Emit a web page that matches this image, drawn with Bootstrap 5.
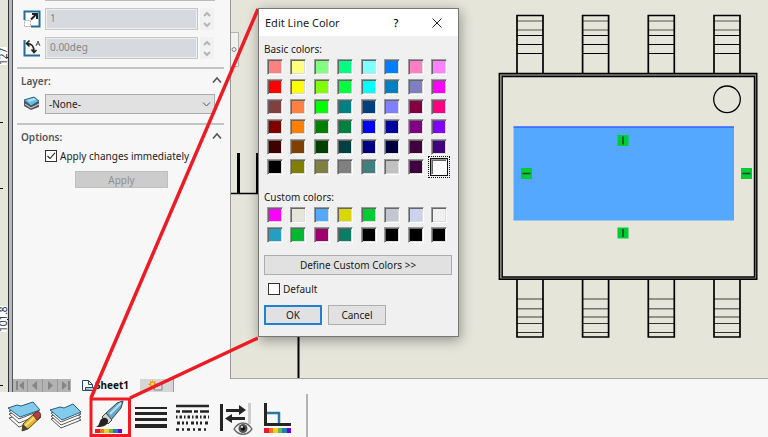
<!DOCTYPE html>
<html lang="en">
<head>
<meta charset="utf-8">
<meta name="viewport" content="width=device-width, initial-scale=1">
<title>Edit Line Color</title>
<link href="https://cdn.jsdelivr.net/npm/bootstrap@5.3.0/dist/css/bootstrap.min.css" rel="stylesheet">
<style>
  body { font-family: "Noto Sans", "Open Sans", sans-serif; font-size: 10px; line-height: 16px; color: #222; background: #f7f7f7; }
  button { font: inherit; }
  svg { display: block; }
  .ruler { width: 13px; background: linear-gradient(90deg, #e5e5da 8px, #333 8px, #333 9px, #b4b7c4 9px, #b4b7c4 12px, #555 12px); }
  .ruler svg { width: 8px; height: 392px; font-family: "Open Sans", sans-serif; font-size: 10px; }
  .props { width: 218px; background: #f7f7f7; border-right: 1px solid #999; }
  .section-rule { height: 2px; margin: 0 6px 0 4px; background: #c4c4c4; }
  .top-rule { height: 1px; margin: 0 15px 0 32px; background: #bbb; }
  .prop-row { padding: 7px 16px 0 10px; }
  .prop-icon { width: 18px; height: 18px; flex: none; }
  .prop-input { height: 22px; margin-left: 4px; padding: 0 4px 3px; border: 1px solid #c6c6c6; outline: 1px solid #eee; outline-offset: -2px; border-radius: 0; background: #d6dadf; color: #858585; font-size: 10px; line-height: 16px; }
  .prop-input:disabled { background: #d6dadf; }
  .spin { width: 14px; height: 22px; margin-left: 2px; background: #f1f1f1; }
  .spin button { height: 11px; padding: 0; border: 0; background: none; }
  .heading { font-weight: 600; color: #555; padding: 4px 7px 0 8px; }
  .heading button { border: 0; background: none; padding: 0 1px; }
  .layer-row { padding: 5px 15px 9px 10px; }
  .layer-select { height: 20px; margin-left: 4px; padding: 0 3px; border: 1px solid #ababab; border-radius: 0; font-size: 10px; line-height: 16px; color: #222;
    background: #e1e1e1 url("data:image/svg+xml,%3Csvg xmlns='http://www.w3.org/2000/svg' viewBox='0 0 9 9'%3E%3Cpath d='M1 2.5 4.5 6 8 2.5' fill='none' stroke='%23555'/%3E%3C/svg%3E") no-repeat right 3px center / 9px 9px; }
  .tick { appearance: none; width: 12px; height: 12px; margin: 0; border: 1px solid #333; background: #fff; }
  .tick:checked { background: #fff url("data:image/svg+xml,%3Csvg xmlns='http://www.w3.org/2000/svg' viewBox='0 0 10 10'%3E%3Cpath d='M1.5 5 4 7.5 9 1.8' fill='none' stroke='%23222' stroke-width='1.1'/%3E%3C/svg%3E") center / 10px 10px; }
  .tick + label { padding-left: 3px; }
  .options-body { padding: 3px 0 0 32px; }
  .apply { width: 93px; height: 17px; margin: 7px 0 0 30px; padding: 0; border: 1px solid #bfbfbf; background: #ccc; color: #909090; line-height: 14px; }
  .drawing { background: #e5e5da; border-bottom: 1px solid #a5a5a5; min-width: 0; min-height: 0; }
  .drawing > svg { width: 100%; height: 378px; }
  .dialog-box { left: 27px; top: 8px; width: 201px; background: #f0f0f0; border: 1px solid #777; box-shadow: 1px 3px 12px rgba(0, 0, 0, .38); color: #1a1a1a; }
  .title-bar { height: 27px; background: #fff; padding: 0 15px 0 6px; font-size: 11px; }
  .title-bar button { border: 0; background: none; padding: 0; width: 12px; }
  .title-bar .help { margin-right: 29px; font-weight: 500; }
  .dialog-content { padding: 5px 6px 11px 5px; }
  .swatches { display: grid; grid-template-columns: repeat(7, 1fr) 16px; row-gap: 4px; padding: 0 5px 0 3px; margin-top: 2px; }
  .swatch { width: 16px; height: 16px; padding: 0; border: 1px solid; border-color: #999 #fff #fff #999; box-shadow: inset 1px 1px #666, inset -1px -1px #ddd; }
  .swatch[aria-pressed="true"] { outline: 1px solid #111; box-shadow: 0 0 0 2px #f0f0f0, inset 1px 1px #666; position: relative; }
  .swatch[aria-pressed="true"]::after { content: ""; position: absolute; inset: -4px; border: 1px dotted #111; }
  .custom-label { margin-top: 14px; }
  .win-btn { height: 20px; padding: 0; border: 1px solid #adadad; background: #e1e1e1; color: #1a1a1a; line-height: 16px; }
  .win-btn.primary-choice { border: 2px solid #2080d4; margin-right: 6px; }
  .win-btn.define { margin: 12px 0 6px; }
  .choice { width: 58px; }
  .tabs-row { height: 13px; background: #f7f7f7; }
  .page-nav { width: 58px; background: #aaa; }
  .page-nav button { border: 1px solid #999; border-width: 0 1px 0 0; background: #b3b3b3; padding: 0; flex: 1; }
  .sheet { width: 69px; border: 0; background: #f7f7f7; padding: 0 0 0 10px; font-weight: 700; font-size: 10px; line-height: 13px; color: #111; }
  .new-sheet { width: 34px; padding: 0 0 0 8px; border: 0; border-right: 1px solid #999; background: #d6d6d6; }
  .tools { height: 45px; background: #f7f7f7; padding-left: 3px; }
  .tool-grid { display: grid; grid-template-columns: repeat(7, 1fr); width: 296px; }
  .tool-grid button { border: 0; background: none; padding: 6px 0 0; }
  .tool-grid svg { width: 38px; height: 38px; margin: 0 auto; }
  .tool-end { width: 2px; margin: 2px 0 0 7px; background: #b5b5b5; }
  .callout { left: 0; top: 0; width: 258px; height: 437px; pointer-events: none; z-index: 5; }
</style>
<script src="https://cdn.jsdelivr.net/npm/bootstrap@5.3.0/dist/js/bootstrap.bundle.min.js"></script>
</head>
<body>
<div class="d-flex flex-column min-vh-100 position-relative overflow-hidden">
  <main class="d-flex flex-grow-1">
    <div class="ruler">
      <svg viewBox="0 0 8 392">
        <path d="M0 47h7v18H0zM0 306h7v26H0z" fill="#fff"/>
        <path d="M7 57.500h1M0 122.500h3M0 188.500h3M7 319.500h1M0 385.500h3" stroke="#111"/>
        <text transform="translate(7 65) rotate(-90)" fill="#222">127</text>
        <text transform="translate(7 332) rotate(-90)" fill="#222">101.8</text>
      </svg>
    </div>
    <div class="d-flex flex-column flex-grow-1">
      <div class="d-flex flex-grow-1">
        <aside class="props">
          <div class="top-rule"></div>
          <div class="prop-row d-flex align-items-center">
            <svg class="prop-icon" viewBox="0 0 18 18"><path d="M1.500 10V1.500h15v15H8" fill="#fff" stroke="#246f99" stroke-width="2"/><path d="M1.500 10.500h6v6h-6z" fill="#fff" stroke="#aaa" stroke-dasharray="2 1"/><path d="M8 9.500 13 4.500M9 4h5v5" fill="none" stroke="#222" stroke-width="2"/></svg>
            <input class="prop-input form-control" aria-label="Scale" value="1" disabled>
            <div class="spin d-flex flex-column">
              <button aria-label="Increase scale"><svg width="14" height="11"><path d="M4 8l3-3 3 3" fill="none" stroke="#b5b5b5" stroke-width="2"/></svg></button>
              <button aria-label="Decrease scale"><svg width="14" height="11"><path d="M4 4l3 3 3-3" fill="none" stroke="#b5b5b5" stroke-width="2"/></svg></button>
            </div>
          </div>
          <div class="prop-row d-flex align-items-center">
            <svg class="prop-icon" viewBox="0 0 18 18"><path d="M1.500 1v15.500H17" fill="none" stroke="#246f99" stroke-width="2"/><path d="M4 4.500c5 0 7 3 7 8M6.500 1.500 3.500 4.500l3 3M8.500 10.500l2.500 3 2.500-2.500" fill="none" stroke="#222" stroke-width="1.600"/><path d="M13 7l2-5 2 5M14 5h2" fill="none" stroke="#555"/></svg>
            <input class="prop-input form-control" aria-label="Angle" value="0.00deg" disabled>
            <div class="spin d-flex flex-column">
              <button aria-label="Increase angle"><svg width="14" height="11"><path d="M4 8l3-3 3 3" fill="none" stroke="#b5b5b5" stroke-width="2"/></svg></button>
              <button aria-label="Decrease angle"><svg width="14" height="11"><path d="M4 4l3 3 3-3" fill="none" stroke="#b5b5b5" stroke-width="2"/></svg></button>
            </div>
          </div>
          <div class="section-rule mt-2"></div>
          <div class="heading d-flex justify-content-between">
            <label for="layer">Layer:</label>
            <button aria-label="Collapse layer"><svg width="10" height="16"><path d="M1 9.500 5 5l4 4.500" fill="none" stroke="#555" stroke-width="1.600"/></svg></button>
          </div>
          <div class="layer-row d-flex align-items-center">
            <svg class="prop-icon" viewBox="0 0 18 18"><path d="M1 6v5l7 4 8-3V7z" fill="#555"/><path d="m2 9 6 4 8-4" stroke="#ddd" fill="none"/><path d="M1 5 11 2l5 4-8 5z" fill="#65bce2" stroke="#2a6585"/><path d="m4 5 7-2 2 2-7 2z" fill="#a5e0f5"/></svg>
            <select class="layer-select form-select" id="layer"><option>-None-</option></select>
          </div>
          <div class="section-rule"></div>
          <div class="heading d-flex justify-content-between">
            <span>Options:</span>
            <button aria-label="Collapse options"><svg width="10" height="16"><path d="M1 9.500 5 5l4 4.500" fill="none" stroke="#555" stroke-width="1.600"/></svg></button>
          </div>
          <div class="options-body">
            <div class="d-flex align-items-center">
              <input class="tick" type="checkbox" id="instant" checked>
              <label for="instant">Apply changes immediately</label>
            </div>
            <button class="apply d-block" disabled>Apply</button>
          </div>
        </aside>
        <section class="drawing flex-grow-1 position-relative">
          <svg viewBox="231 0 537 378" preserveAspectRatio="xMinYMin meet">
            <defs>
              <g id="leg-top" fill="none" stroke="#000">
                <path d="M0 21h26M0 30h26" stroke="#85857c" stroke-width="1.600"/>
                <path d="M0 35.500h26M0 44.500h26M0 53.500h26"/>
                <path d="M0 73V15.500h26V73" stroke-width="1.700"/>
              </g>
              <g id="leg-bottom" fill="none" stroke="#000">
                <path d="M0 299h26M0 308.700h26M0 317h26" stroke="#75756d" stroke-width="1.600"/>
                <path d="M0 323.500h26M0 332.500h26" stroke="#333"/>
                <path d="M0 280v57h26v-57" stroke-width="1.700"/>
              </g>
              <g id="relation">
                <path d="M0 0h11v11H0z" fill="#0c3"/>
                <path d="M5.500 1.500v8" stroke="#24402a" stroke-width="1.500"/>
              </g>
            </defs>
            <path d="M231 32.500h7.500v34H231" fill="#f1f1ee" stroke="#b5b5b0"/>
            <circle cx="234" cy="49.500" r="2" fill="none" stroke="#888"/>
            <path d="M238.500 153v40" stroke="#000" stroke-width="3"/>
            <path d="M231 193.500h27" stroke="#000" stroke-width="1.500"/>
            <path d="M257 153v41M298.500 330v48" stroke="#000" stroke-width="2"/>
            <use href="#leg-top" x="517"/><use href="#leg-top" x="582.600"/><use href="#leg-top" x="648.300"/><use href="#leg-top" x="714"/>
            <use href="#leg-bottom" x="517"/><use href="#leg-bottom" x="582.600"/><use href="#leg-bottom" x="648.300"/><use href="#leg-bottom" x="714"/>
            <path d="M500.500 75h255v203.500h-255z" fill="none" stroke="#85857c" stroke-width="2"/>
            <path d="M499.300 73.500h257.500v205.700H499.300zM502.200 76.500h252.300v200.500H502.200z" fill="none" stroke="#000" stroke-width="1.400"/>
            <circle cx="727" cy="99.300" r="13.300" fill="none" stroke="#000" stroke-width="1.300"/>
            <path d="M513.500 126.500H734v94H513.500z" fill="#54a8ff"/>
            <path d="M513.500 127H734" stroke="#263fff"/>
            <use href="#relation" x="617.500" y="135"/><use href="#relation" x="617.500" y="227.500"/>
            <use href="#relation" transform="translate(521 179) rotate(-90)"/><use href="#relation" transform="translate(741 179) rotate(-90)"/>
          </svg>
          <div class="dialog-box position-absolute" role="dialog" aria-labelledby="dialog-title">
            <div class="title-bar d-flex align-items-center">
              <span class="me-auto" id="dialog-title">Edit Line Color</span>
              <button class="help">?</button>
              <button aria-label="Close"><svg width="12" height="12"><path d="m1.500 1.500 9 9M10.500 1.500l-9 9" stroke="#222"/></svg></button>
            </div>
            <div class="dialog-content">
              <div>Basic colors:</div>
              <div class="swatches" id="basic"></div>
              <div class="custom-label">Custom colors:</div>
              <div class="swatches" id="custom"></div>
              <button class="win-btn define w-100">Define Custom Colors &gt;&gt;</button>
              <div class="d-flex align-items-center ps-1">
                <input class="tick" type="checkbox" id="use-default">
                <label for="use-default">Default</label>
              </div>
              <div class="d-flex mt-2">
                <button class="win-btn choice primary-choice">OK</button>
                <button class="win-btn choice">Cancel</button>
              </div>
            </div>
          </div>
        </section>
      </div>
      <div class="tabs-row d-flex">
        <div class="page-nav d-flex">
          <button aria-label="First sheet"><svg width="14" height="13" fill="#858585"><path d="M3 2h2v9H3zM11 2v9L6 6.500z"/></svg></button>
          <button aria-label="Previous sheet"><svg width="14" height="13" fill="#858585"><path d="M9 2v9L4 6.500z"/></svg></button>
          <button aria-label="Next sheet"><svg width="14" height="13" fill="#858585"><path d="M5 2v9l5-4.500z"/></svg></button>
          <button aria-label="Last sheet"><svg width="14" height="13" fill="#858585"><path d="M10 2h2v9h-2zM4 2v9l5-4.500z"/></svg></button>
        </div>
        <button class="sheet d-flex align-items-center"><svg width="14" height="13" fill="none"><path d="M1.500 1.500h6l4 4v6h-10z" fill="#fff" stroke="#234a62"/><path d="M7.500 1.500v4h4" stroke="#234a62"/><path d="M4.500 11V8.500h8v3z" fill="#b5d5e5" stroke="#234a62"/></svg>Sheet1</button>
        <button class="new-sheet" aria-label="Add sheet"><svg width="18" height="13"><path d="M6 5h8v6H6z" fill="#d8dde2" stroke="#7b8793"/><path d="M4 0l1 3 3-1-1.500 2.500L9 6 6.500 7 7 10 4.500 8 2 9.500l.500-3L0 5.500 2.500 4 1.500 1.500 4 3z" fill="#f58a1e"/><circle cx="4.500" cy="5" r="1.600" fill="#ffe04a"/></svg></button>
      </div>
    </div>
  </main>
  <footer class="tools d-flex">
    <div class="tool-grid">
      <button aria-label="Layer properties"><svg viewBox="0 0 38 38">
        <g stroke="#555" fill="#fff"><path d="m4 19 21-6 9 7-20 8z"/><path d="m4 15 21-6 9 7-20 8z"/><path d="m4 12 21-6 9 6-20 8z"/></g>
        <path d="M3 9 12 6l4 1 12-4 7 8-20 7z" fill="#83cbed" stroke="#27617d" stroke-linejoin="round"/>
        <path d="m17 32 1-7 13-12 5 5-13 12z" fill="#e5b22c" stroke="#5b4a1c"/><path d="m20 27 12-11" stroke="#ffe37b" stroke-width="2"/><path d="m28 16 3-3c3-2 6 2 4 5l-3 3z" fill="#b63c3f" stroke="#5d3536"/><path d="m17 32 1-7 5 5z" fill="#444"/></svg></button>
      <button aria-label="Change layer"><svg viewBox="0 0 38 38">
        <g stroke="#555" fill="#fff"><path d="m4 20 20-6 10 7-20 8z"/><path d="m4 17 20-6 10 7-20 8z"/><path d="m4 14 20-6 10 7-20 8z"/></g>
        <path d="m3 11 10-3 4 1 9-4 8 8-19 8z" fill="#83cbed" stroke="#27617d" stroke-linejoin="round"/></svg></button>
      <button aria-label="Line color"><svg viewBox="2 0 38 38">
        <path d="M17 15 29 4l6-2-2 7-10 12z" fill="#6ba8c6" stroke="#28485a"/><path d="M22 15 33 4" stroke="#b8e1f4" stroke-width="2"/><path d="m14 18 4-4 6 7-4 4z" fill="#d4d4d4" stroke="#444"/><path d="M8 28c5-2 2-7 7-9 5-1 7 4 3 7-3 2-7 2-10 2z" fill="#242424"/>
        <path d="M7 30h5v4H7z" fill="#f0142d"/><path d="M12 30h4v4h-4z" fill="#f47720"/><path d="M16 30h5v4h-5z" fill="#f2ce23"/><path d="M21 30h4v4h-4z" fill="#69b945"/><path d="M25 30h5v4h-5z" fill="#277ab2"/><path d="M30 30h4v4h-4z" fill="#6a00df"/></svg></button>
      <button aria-label="Line thickness"><svg viewBox="0 0 38 38"><path d="M3 8h32v2H3zM3 13h32v3H3zM3 19h32v3H3zM3 25h32v4H3z" fill="#252525"/></svg></button>
      <button aria-label="Line style"><svg viewBox="0 0 38 38" stroke="#252525" fill="none"><path d="M2 7h33" stroke-width="2.500"/><path d="M2 12.500h33" stroke-width="2.500" stroke-dasharray="4 2 10 2"/><path d="M2 18h33" stroke-width="3" stroke-dasharray="1.500 2 2.500 2"/><path d="M3 24h32" stroke-width="3" stroke-dasharray="3 2 2 2 2 3"/><path d="M2 30.500h33" stroke-width="2.500" stroke-dasharray="3 3 2 3"/></svg></button>
      <button aria-label="Hide or show edges"><svg viewBox="0 0 38 38">
        <path d="M3 5h3v27H3z" fill="#222"/><path d="M31 4h3v21h-3z" fill="#ccc"/><path d="M9 10h13V6l7 5-7 5v-3H9zM28 18H15v-3l-7 4.500 7 4.500v-3h13z" fill="#252525"/>
        <path d="M17 30c5-8 13-8 18 0-5 7-13 7-18 0z" fill="#f4f4f4" stroke="#666" stroke-width="1.300"/><circle cx="26" cy="29.500" r="4.500" fill="#555"/><circle cx="26" cy="29.500" r="2.200" fill="#111"/><circle cx="25" cy="28" r="1" fill="#fff"/></svg></button>
      <button aria-label="Color display mode"><svg viewBox="0 0 38 38">
        <path d="M8 14h12v13" fill="none" stroke="#287aa2" stroke-width="2.500"/><path d="M5 4h3v20h24v3H5z" fill="#252525"/>
        <path d="M5 29h5v5H5z" fill="#f0142d"/><path d="M10 29h4v5h-4z" fill="#f47720"/><path d="M14 29h5v5h-5z" fill="#f2ce23"/><path d="M19 29h4v5h-4z" fill="#69b945"/><path d="M23 29h5v5h-5z" fill="#277ab2"/><path d="M28 29h4v5h-4z" fill="#6a00df"/></svg></button>
    </div>
    <div class="tool-end"></div>
  </footer>
  <svg class="callout position-absolute" viewBox="0 0 258 437" fill="none" stroke="#ed1c24" stroke-width="3.500"><path d="M258 9 91 398M258 338l-128 60"/><path d="M91 399h38.500v36.500H91z" stroke-width="3"/></svg>
</div>
<script>
  const palettes = {
    basic: "ff8080 ffff80 80ff80 00ff80 80ffff 0080ff ff80c0 ff80ff ff0000 ffff00 80ff00 00ff40 00ffff 0080c0 8080c0 ff00ff 804040 ff8040 00ff00 008080 004080 8080ff 800040 ff0080 800000 ff8000 008000 008040 0000ff 0000a0 800080 8000ff 400000 804000 004000 004040 000080 000040 400040 400080 000000 808000 808040 808080 408080 c0c0c0 400040 ffffff",
    custom: "ff00ff e5e5da 54a8ff d8d800 00cc33 c3c7d2 cad2ee f0f0f0 239fc4 00b832 a0006e 0a7d64 000000 000000 000000 000000"
  };
  for (const [id, list] of Object.entries(palettes)) {
    for (const hex of list.split(" ")) {
      const b = document.createElement("button");
      b.className = "swatch";
      b.style.backgroundColor = "#" + hex;
      b.setAttribute("aria-label", "#" + hex);
      b.setAttribute("aria-pressed", hex === "ffffff");
      document.getElementById(id).append(b);
    }
  }
</script>
</body>
</html>
